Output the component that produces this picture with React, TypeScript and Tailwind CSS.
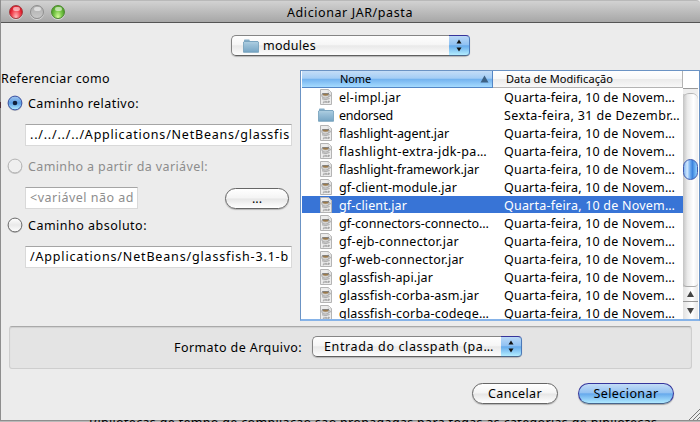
import React from "react";

type FileRow = { name: string; width: string; folder?: boolean };

const files: FileRow[] = [
  { name: "el-impl.jar", width: "w-[62px]" },
  { name: "endorsed", width: "w-[54px]", folder: true },
  { name: "flashlight-agent.jar", width: "w-[110px]" },
  { name: "flashlight-extra-jdk-pa…", width: "w-[148px]" },
  { name: "flashlight-framework.jar", width: "w-[140px]" },
  { name: "gf-client-module.jar", width: "w-[118px]" },
  { name: "gf-client.jar", width: "w-[68px]" },
  { name: "gf-connectors-connecto…", width: "w-[150px]" },
  { name: "gf-ejb-connector.jar", width: "w-[120px]" },
  { name: "gf-web-connector.jar", width: "w-[125px]" },
  { name: "glassfish-api.jar", width: "w-[94px]" },
  { name: "glassfish-corba-asm.jar", width: "w-[140px]" },
  { name: "glassfish-corba-codege…", width: "w-[150px]" },
];

/* Single-line text that is spread evenly over a fixed width. */
function Fit({ children, className }: { children: string; className: string }) {
  const ref = React.useRef<HTMLSpanElement>(null);
  const [spacing, setSpacing] = React.useState(0);
  React.useLayoutEffect(() => {
    const el = ref.current;
    if (!el || !el.parentElement) return;
    const natural = el.getBoundingClientRect().width;
    const wanted = el.parentElement.getBoundingClientRect().width;
    setSpacing((wanted - natural) / children.length);
  }, [children]);
  return (
    <span className={`block shrink-0 whitespace-nowrap ${className}`}>
      <span ref={ref} style={{ letterSpacing: `${spacing}px` }}>
        {children}
      </span>
    </span>
  );
}

function FolderIcon() {
  return (
    <svg width="16" height="14" viewBox="0 0 16 14" className="block shrink-0">
      <defs>
        <linearGradient id="folder" x1="0" y1="0" x2="0" y2="1">
          <stop offset="0" stopColor="#a9cbe0" />
          <stop offset="1" stopColor="#76a5c4" />
        </linearGradient>
      </defs>
      <path d="M1 3V1.3Q1 .5 1.8 .5H6Q6.7 .5 6.7 1.3V2H15V4H1z" fill="#86aec8" />
      <path d="M.5 3H15.5V13.3H.5z" fill="url(#folder)" stroke="#6796b3" strokeWidth=".7" />
      <path d="M1 3.6H15" stroke="#bfdcec" strokeWidth=".6" />
    </svg>
  );
}

function JarIcon() {
  return (
    <svg width="12" height="16" viewBox="0 0 12 16" className="block shrink-0">
      <path d="M.5 .5H8.5L11.5 3.5V15.5H.5z" fill="#ececec" stroke="#b4b4b4" />
      <path d="M8.3 .6V3.7H11.4z" fill="#fff" stroke="#bdbdbd" strokeWidth=".6" />
      <path d="M1.8 5.4H9V7Q9 9.2 5.4 9.2Q1.8 9.2 1.8 7z" fill="#d4d4d4" stroke="#8c8c8c" strokeWidth=".6" />
      <path d="M2.2 4.7H9" stroke="#4d4d4d" strokeWidth=".8" />
      <ellipse cx="5.6" cy="5.7" rx="2.9" ry="1" fill="#9a7a4c" />
      <path d="M9 5.6Q11 5.6 10.4 7Q9.9 8 8.6 8" fill="none" stroke="#999" strokeWidth=".7" />
      <path d="M2 9.8Q5.6 11.2 9.6 9.6" fill="none" stroke="#8b8b8b" strokeWidth=".8" />
      <path d="M4 11.7V13.8H2.8M5.2 14V12.3H6.7V14M8 14V12.2H9.3V13.2H8" fill="none" stroke="#969696" strokeWidth=".8" />
    </svg>
  );
}

function Arrows() {
  return (
    <span className="flex h-full w-[21px] shrink-0 items-center justify-center rounded-r-[4px] border border-l-0 border-[#36349a] border-r-[#4b79b8] border-b-[#4c6688] bg-[linear-gradient(#bad8f6_0%,#91c2f3_45%,#67abeb_52%,#b3edff_100%)]">
      <svg width="6" height="13" viewBox="0 0 6 13" className="mr-px">
        <path d="M3 .5L5.5 4.5H.5zM3 12.5L.5 8.5H5.5z" fill="#111" />
      </svg>
    </span>
  );
}

function Radio({ checked, disabled }: { checked?: boolean; disabled?: boolean }) {
  return (
    <svg width="16" height="17" viewBox="0 0 16 17" className="block shrink-0">
      <defs>
        <linearGradient id="radio-on" x1="0" y1="0" x2="0" y2="1">
          <stop offset="0" stopColor="#a3c6ee" />
          <stop offset=".5" stopColor="#5a9de4" />
          <stop offset="1" stopColor="#b5f0ff" />
        </linearGradient>
        <linearGradient id="radio-off" x1="0" y1="0" x2="0" y2="1">
          <stop offset="0" stopColor="#fff" />
          <stop offset=".5" stopColor="#e9e9e9" />
          <stop offset="1" stopColor="#fff" />
        </linearGradient>
      </defs>
      <circle cx="8" cy="8.8" r="7.2" fill="#aaa" opacity=".6" />
      <circle
        cx="8"
        cy="8"
        r="6.9"
        fill={checked ? "url(#radio-on)" : disabled ? "#efefef" : "url(#radio-off)"}
        stroke={checked ? "#3a4fa0" : disabled ? "#b4b4b4" : "#6b6b6b"}
      />
      {checked && <circle cx="8" cy="8" r="2.3" fill="#10203c" />}
    </svg>
  );
}

function Light({ kind }: { kind: "red" | "gray" | "green" }) {
  const tone = {
    red: "border-[#a23a3e] bg-[radial-gradient(ellipse_at_50%_95%,#ffc0c0_0%,#f4515c_45%,#dc1828_75%)]",
    gray: "border-[#8f8f8f] bg-[linear-gradient(#adadad,#c9c9c9)]",
    green: "border-[#4c8a30] bg-[radial-gradient(ellipse_at_50%_95%,#d9ff9c_0%,#7cc94c_45%,#55a52c_75%)]",
  }[kind];
  return (
    <span className={`flex h-[14px] w-[14px] justify-center rounded-full border shadow-[0_1px_0_#d8d8d8] ${tone}`}>
      <span className="mt-px h-[4px] w-[7px] rounded-full bg-white/55" />
    </span>
  );
}

const combo =
  "flex h-[21px] rounded-[5px] bg-[linear-gradient(#fff_0%,#f6f6f6_45%,#e9e9e9_52%,#fff_100%)] shadow-[0_1px_1px_#b5b5b5]";
const comboBody =
  "flex h-full flex-1 items-center rounded-l-[5px] border border-r-0 border-[#858585] border-b-[#5f5f5f]";
const field =
  "ml-[24px] flex h-[22px] items-center overflow-hidden border border-[#d9d9d9] border-t-[#a5a5a5] bg-white pl-1";

export default function App() {
  return (
    <div className="relative h-[422px] w-[700px] overflow-hidden bg-[#b9b9b9] font-['Noto_Sans','Open_Sans',sans-serif] text-[12.5px] leading-[18px] text-black">
      <div className="flex h-[421px] flex-col border-b border-l border-[#8e8e8e] bg-[#ececec]">
        <header className="flex h-[23px] shrink-0 items-center rounded-tr-[4px] border-t border-b border-t-[#b9b9b9] border-b-[#555] bg-[linear-gradient(#d2d2d2,#a7a7a7)] pl-2">
          <div className="flex gap-[7px]">
            <Light kind="red" />
            <Light kind="gray" />
            <Light kind="green" />
          </div>
          <div className="ml-[222px] mt-[2px]">
            <Fit className="w-[126px]">Adicionar JAR/pasta</Fit>
          </div>
        </header>

        <div className="flex h-[47px] shrink-0 pt-3 pl-[230px]">
          <div className={`${combo} w-[239px]`}>
            <div className={`${comboBody} gap-[4px] pl-[11px]`}>
              <FolderIcon />
              <Fit className="w-[53px]">modules</Fit>
            </div>
            <Arrows />
          </div>
        </div>

        <main className="flex h-[251px] shrink-0">
          <section className="w-[299px] shrink-0">
            <div className="h-[25px]">
              <Fit className="w-[109px]">Referenciar como</Fit>
            </div>
            <div className="flex h-[29px] gap-[5px] pl-[6px]">
              <Radio checked />
              <Fit className="w-[111px]">Caminho relativo:</Fit>
            </div>
            <div className={`${field} w-[267px]`}>
              <Fit className="w-[260px]">../../../../Applications/NetBeans/glassfis</Fit>
            </div>
            <div className="mt-[12px] flex h-[29px] gap-[5px] pl-[6px] text-[#8d8d8d]">
              <Radio disabled />
              <Fit className="w-[180px]">Caminho a partir da variável:</Fit>
            </div>
            <div className="flex h-[30px]">
              <div className={`${field} w-[113px] text-[#8d8d8d]`}>
                <Fit className="w-[104px]">{"<variável não ad"}</Fit>
              </div>
              <button className="mt-px ml-[87px] h-[21px] w-[64px] rounded-full border border-[#666] bg-[linear-gradient(#fff_0%,#f4f4f4_48%,#e6e6e6_52%,#fff_100%)] leading-[17px] shadow-[0_1px_1px_#b5b5b5]">
                ...
              </button>
            </div>
            <div className="flex h-[29px] gap-[5px] pl-[6px]">
              <Radio />
              <Fit className="w-[119px]">Caminho absoluto:</Fit>
            </div>
            <div className={`${field} w-[267px]`}>
              <Fit className="w-[259px]">/Applications/NetBeans/glassfish-3.1-b</Fit>
            </div>
          </section>

          <section className="flex h-[251px] flex-1 flex-col border border-b-2 border-[#6b93c4] border-b-[#86b3e8] bg-white pl-px">
            <div className="flex h-[17px] shrink-0 text-[11px] leading-[16px]">
              <div className="flex w-[191px] justify-between border-r border-b border-[#5487c6] bg-[linear-gradient(#c4ddf7_0%,#a4cdf5_45%,#74b3ef_52%,#a5dbff_100%)] pl-[38px]">
                <Fit className="w-[31px]">Nome</Fit>
                <svg width="9" height="8" viewBox="0 0 9 8" className="mt-1 mr-[3px]">
                  <path d="M4.5 .5L8.5 7.5H.5z" fill="#3d6285" />
                </svg>
              </div>
              <div className="w-[190px] border-r border-b border-[#b4b4b4] bg-[linear-gradient(#fff_0%,#f8f8f8_48%,#ebebeb_52%,#f8f8f8_100%)] pl-[13px]">
                <Fit className="w-[107px]">Data de Modificação</Fit>
              </div>
            </div>
            <div className="flex min-h-0 flex-1">
              <div className="h-full w-[381px] overflow-hidden">
                {files.map((f) => {
                  const selected = f.name === "gf-client.jar";
                  return (
                    <div key={f.name} className="h-[18px]">
                      <div className={`flex h-[17px] items-center ${selected ? "bg-[#3874d6] text-white" : ""}`}>
                        <span className="flex w-[37px] justify-center pl-[11px]">
                          {f.folder ? <FolderIcon /> : <JarIcon />}
                        </span>
                        <span className="w-[165px] pt-[2px]">
                          <Fit className={f.width}>{f.name}</Fit>
                        </span>
                        <span className="pt-[2px]">
                          {f.folder ? (
                            <Fit className="w-[176px]">Sexta-feira, 31 de Dezembr…</Fit>
                          ) : (
                            <Fit className="w-[171px]">Quarta-feira, 10 de Novem…</Fit>
                          )}
                        </span>
                      </div>
                    </div>
                  );
                })}
              </div>
              <div className="flex w-[15px] flex-col bg-[linear-gradient(90deg,#c4c4c4,#eaeaea_30%,#fff_70%,#ededed)]">
                <div className="h-[6px] border-t border-[#999] bg-[#eee]">
                  <div className="mt-1 h-[6px] rounded-t-full border-t border-[#b5b5b5] bg-[linear-gradient(90deg,#c4c4c4,#eaeaea_30%,#fff_70%,#ededed)]" />
                </div>
                <div className="mt-[65px] h-[21px] rounded-full border border-[#3f5bb0] bg-[linear-gradient(90deg,#83b3ec,#d0e8ff_25%,#6daaf0_48%,#3c83dd_65%,#91d2ff)]" />
                <div className="mt-auto flex h-[36px] flex-col">
                  <div className="h-[4px] rounded-b-full border-b border-[#aaa]" />
                  <div className="flex h-[15px] items-center justify-center border-b border-[#999] bg-[linear-gradient(90deg,#e1e1e1,#fff_60%,#e7e7e7)]">
                    <svg width="7" height="6" viewBox="0 0 7 6">
                      <path d="M3.5 0L7 6H0z" fill="#444" />
                    </svg>
                  </div>
                  <div className="flex h-[17px] items-center justify-center bg-[linear-gradient(90deg,#e1e1e1,#fff_60%,#e7e7e7)]">
                    <svg width="7" height="6" viewBox="0 0 7 6">
                      <path d="M3.5 6L7 0H0z" fill="#444" />
                    </svg>
                  </div>
                </div>
              </div>
            </div>
          </section>
        </main>

        <div className="mt-[5px] ml-2 flex h-[43px] w-[683px] shrink-0 items-start rounded-[3px] border border-[#cecece] border-t-[#a9a9a9] bg-[#e4e4e4] pt-[9px] pl-[164px] shadow-[inset_0_1px_1px_#cfcfcf]">
          <div className="mt-[3px]">
            <Fit className="w-[128px]">Formato de Arquivo:</Fit>
          </div>
          <div className={`${combo} ml-[10px] w-[210px]`}>
            <div className={`${comboBody} pl-[11px]`}>
              <Fit className="w-[170px]">Entrada do classpath (pa…</Fit>
            </div>
            <Arrows />
          </div>
        </div>

        <footer className="flex flex-1 items-start pt-[14px] pl-[471px]">
          <button className="flex h-[21px] w-[86px] items-center justify-center rounded-full border border-[#666] bg-[linear-gradient(#fff_0%,#f4f4f4_48%,#e6e6e6_52%,#fff_100%)] shadow-[0_1px_1px_#b5b5b5]">
            <Fit className="w-[54px]">Cancelar</Fit>
          </button>
          <button className="ml-5 flex h-[21px] w-[96px] items-center justify-center rounded-full border border-[#35359c] border-b-[#48658c] bg-[linear-gradient(#c3dcf6_0%,#93c2f2_46%,#66a9ec_52%,#b1eaff_100%)] shadow-[0_1px_1px_#a5a5a5]">
            <Fit className="w-[65px]">Selecionar</Fit>
          </button>
          <svg width="12" height="12" viewBox="0 0 12 12" className="mt-auto ml-auto">
            <path d="M1 12L12 1M5 12L12 5M9 12L12 9" stroke="#777" />
          </svg>
        </footer>
      </div>

      <div className="absolute top-[420px] left-[89px] h-[2px] w-[575px] overflow-hidden">
        <div className="-mt-[6px]">
          <Fit className="w-[572px]">
            Bibliotecas de tempo de compilação são propagadas para todas as categorias de bibliotecas.
          </Fit>
        </div>
      </div>
      <div className="absolute top-[102px] left-0 h-[6px] w-px bg-[#4c2e38]" />
    </div>
  );
}
